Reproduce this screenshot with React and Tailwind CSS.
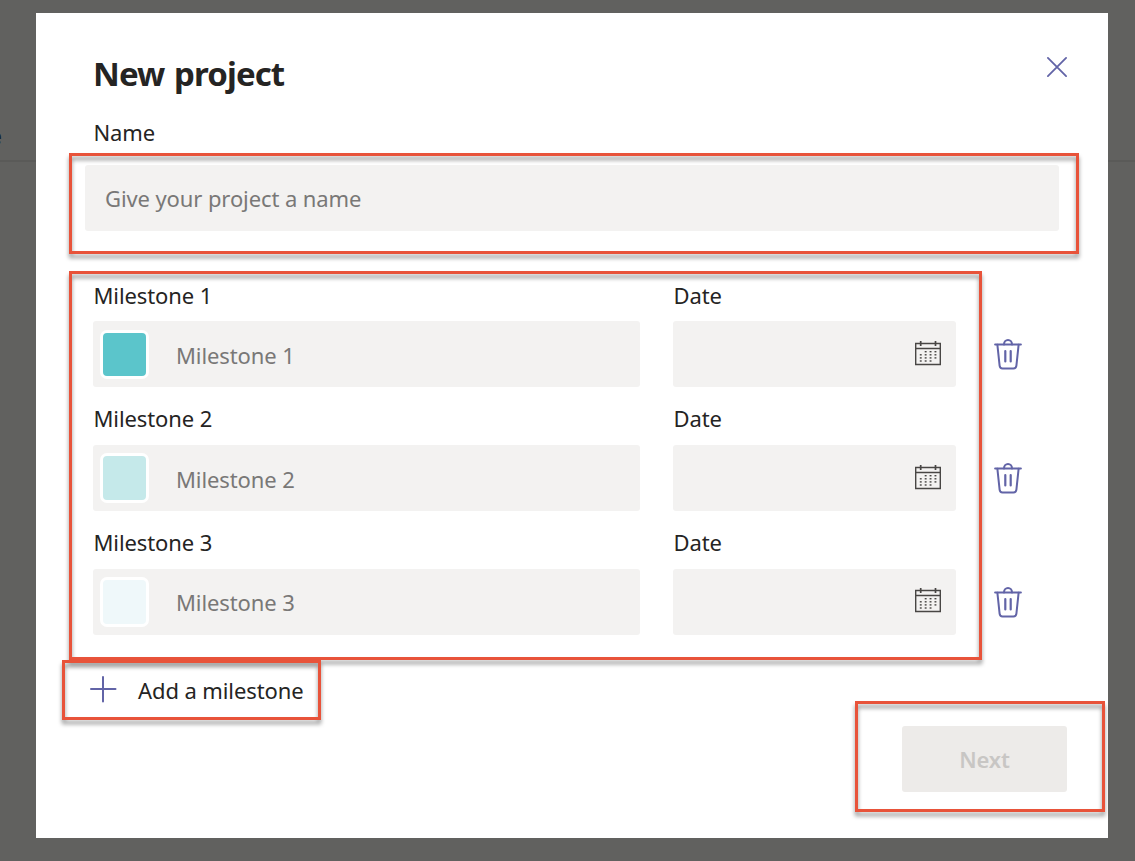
import React from "react";

const milestones = [
  { id: 1, color: "bg-[#5bc5cb]", label: "pt-0", swatch: "mt-[9px] h-[49px]", text: "pt-[19px]", calendar: "pt-[18px]" },
  { id: 2, color: "bg-[#c5e9ea]", label: "-mt-px", swatch: "mt-[8px] h-[50px]", text: "pt-[19px]", calendar: "pt-[18px]" },
  { id: 3, color: "bg-[#eff8fa]", label: "-mt-px", swatch: "mt-[8px] h-[50px]", text: "pt-[18px]", calendar: "pt-[17px]" },
];

function CloseIcon() {
  return (
    <svg width="22" height="22" viewBox="0 0 22 22" fill="none" stroke="#6264a7" strokeWidth="1.8" strokeLinecap="round">
      <path d="M1.9 1.9L20.1 20.1M20.1 1.9L1.9 20.1" />
    </svg>
  );
}

function CalendarIcon() {
  const dots = [
    [1, 0], [2, 0], [3, 0],
    [0, 1], [1, 1], [2, 1], [3, 1],
    [0, 2], [1, 2], [2, 2], [3, 2],
    [0, 3], [1, 3], [2, 3],
  ];
  return (
    <svg width="28" height="28" viewBox="0 0 28 28" fill="none" stroke="#484644" strokeWidth="1.4">
      <path d="M1.7 4.5H26.3V25.5H1.7ZM1.7 9.5H26.3" />
      <path d="M6.7 2V7M21.5 2V7" strokeWidth="1.7" />
      {dots.map(([c, r]) => (
        <rect key={`${c}-${r}`} x={5.8 + c * 4.9} y={12 + r * 3.1} width="1.9" height="1.4" fill="#484644" stroke="none" />
      ))}
    </svg>
  );
}

function TrashIcon() {
  return (
    <svg width="30" height="32" viewBox="0 0 30 32" fill="none" stroke="#6264a7" strokeWidth="2" strokeLinecap="round" strokeLinejoin="round">
      <path d="M2.1 6.6H27.9" />
      <path d="M11 6.4A4 4.4 0 0 1 19 6.4" />
      <path d="M4.4 6.8L6.6 27.6Q6.9 30.4 9.5 30.4H20.5Q23.1 30.4 23.4 27.6L25.6 6.8" />
      <path d="M12.3 13V23.4M17.7 13V23.4" strokeWidth="2.2" />
    </svg>
  );
}

function Highlight({ className }) {
  return (
    <div
      className={`pointer-events-none absolute border-3 border-[#e8533a] drop-shadow-[0_4px_2px_rgba(0,0,0,0.42)] ${className}`}
    />
  );
}

export default function App() {
  return (
    <div className="relative h-[861px] w-[1135px] overflow-hidden bg-[#61615f] px-9 pt-[13px] font-['Noto_Sans','Open_Sans',sans-serif] text-[22px] leading-[30px] tracking-[-0.1px] text-[#252423]">
      <div className="absolute top-[160px] left-0 h-[2px] w-full bg-[#5a5a58]" />
      <div className="absolute top-[120px] -left-[11px] font-semibold text-[#14202c]">e</div>

      <div className="relative h-[825px] w-[1072px] bg-white pt-[38px]">
        <header className="flex h-[66px] justify-between pr-[40px] pl-[57px]">
          <h1 className="pt-px text-[33px] leading-[44px] font-bold tracking-[-0.9px] [word-spacing:2px]">New project</h1>
          <button className="mt-[5px] h-[22px]" aria-label="Close">
            <CloseIcon />
          </button>
        </header>

        <label className="block pl-[57.5px]">Name</label>
        <div className="mt-[18px] ml-[49px] h-[66px] w-[974px] rounded-[3px] bg-[#f3f2f1] pt-[18px] pl-[20px] text-[#797877]">
          Give your project a name
        </div>

        <div className="mt-[49px] pl-[57px]">
          {milestones.map((m) => (
            <div key={m.id} className="grid h-[124px] grid-cols-[547px_283px_32px] grid-rows-[41px_66px] gap-x-[33px]">
              <div className={`pl-[0.5px] ${m.label}`}>Milestone {m.id}</div>
              <div className={`pl-[0.5px] ${m.label}`}>Date</div>
              <div />
              <div className="flex rounded-[3px] bg-[#f3f2f1] pl-[7px]">
                <div className={`w-[49px] rounded-[7px] border-3 border-white ${m.color} ${m.swatch}`} />
                <div className={`pl-[27px] text-[#797877] ${m.text}`}>Milestone {m.id}</div>
              </div>
              <div className={`flex justify-end rounded-[3px] bg-[#f3f2f1] pr-[14px] ${m.calendar}`}>
                <CalendarIcon />
              </div>
              <div className="pt-[17px] pl-[4px]">
                <TrashIcon />
              </div>
            </div>
          ))}
        </div>

        <div className="mt-[22px] flex h-[31px] items-start pl-[54px]">
          <svg className="mt-[2px]" width="27" height="27" viewBox="0 0 27 27" fill="none" stroke="#6264a7" strokeWidth="2" strokeLinecap="round">
            <path d="M13 1V25.5M1 13H25.5" />
          </svg>
          <span className="pt-px pl-[21px]">Add a milestone</span>
        </div>

        <button className="mt-[21px] ml-[866px] h-[66px] w-[165px] rounded-[3px] bg-[#edebe9] text-center font-semibold text-[#c8c6c4]">
          Next
        </button>
      </div>

      <Highlight className="top-[153px] left-[69px] h-[101px] w-[1010px]" />
      <Highlight className="top-[271px] left-[69px] h-[389px] w-[913px]" />
      <Highlight className="top-[660px] left-[62px] h-[60px] w-[259px]" />
      <Highlight className="top-[701px] left-[855px] h-[111px] w-[250px]" />
    </div>
  );
}
